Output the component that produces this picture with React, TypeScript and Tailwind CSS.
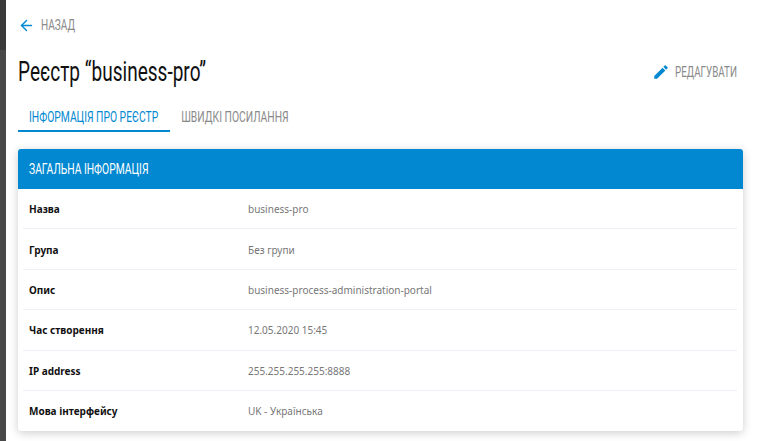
import { ArrowLeft } from 'lucide-react';

const rows = [
  ['Назва', 'business-pro'],
  ['Група', 'Без групи'],
  ['Опис', 'business-process-administration-portal'],
  ['Час створення', '12.05.2020 15:45'],
  ['IP address', '255.255.255.255:8888'],
  ['Мова інтерфейсу', 'UK - Українська'],
];

const App = () => {
  return (
    <div className="flex h-[441px] w-[762px] overflow-hidden bg-white font-['Noto_Sans',sans-serif]">
      {/* Бічна смуга */}
      <div className="flex w-[6px] shrink-0 flex-col bg-[#484848]">
        <div className="h-[50px] bg-[#3a3a3a]"></div>
      </div>

      <div className="flex-1 pl-3 pr-[19px]">
        <div className="flex h-[50px] items-center pt-[1px]">
          <ArrowLeft size={17} strokeWidth={2} className="mr-[6px] text-[#0288d1]" />
          <span className="origin-left scale-x-[0.72] font-['Roboto',sans-serif] text-[14px] text-[#8a8a8a]">НАЗАД</span>
        </div>

        <div className="flex h-[44px] items-center justify-between">
          <h1 className="origin-left scale-x-[0.68] whitespace-nowrap font-['Roboto',sans-serif] text-[28px] leading-none text-[#111111]">
            Реєстр “business-pro”
          </h1>
          <div className="flex items-center">
            <svg width="18" height="18" viewBox="0 0 24 24" className="mr-[5px] fill-[#0288d1]">
              <path d="M3 17.25V21h3.75L17.81 9.94l-3.75-3.75L3 17.25zM20.71 7.04a1 1 0 0 0 0-1.41l-2.34-2.34a1 1 0 0 0-1.41 0l-1.83 1.83 3.75 3.75 1.83-1.83z" />
            </svg>
            <span className="w-[68px] origin-left scale-x-[0.7] whitespace-nowrap font-['Roboto',sans-serif] text-[14px] text-[#8a8a8a]">
              РЕДАГУВАТИ
            </span>
          </div>
        </div>

        <div className="mt-[2px] flex h-[36px] items-end">
          <div className="flex h-[35px] w-[152px] items-center justify-center border-b-2 border-[#0288d1] pt-[7px]">
            <span className="scale-x-[0.737] whitespace-nowrap font-['Roboto',sans-serif] text-[14px] text-[#0288d1]">
              ІНФОРМАЦІЯ ПРО РЕЄСТР
            </span>
          </div>
          <div className="flex h-[35px] w-[130px] items-center justify-center border-b-2 border-transparent pt-[7px]">
            <span className="scale-x-[0.737] whitespace-nowrap font-['Roboto',sans-serif] text-[14px] text-[#8a8a8a]">
              ШВИДКІ ПОСИЛАННЯ
            </span>
          </div>
        </div>

        <div className="mt-[17px] overflow-hidden rounded-[3px] bg-white shadow-[0_2px_10px_rgba(0,0,0,0.2)]">
          <div className="flex h-[40px] items-center bg-[#0288d1] pl-[11px]">
            <span className="origin-left scale-x-[0.737] whitespace-nowrap font-['Roboto',sans-serif] text-[14px] text-white">
              ЗАГАЛЬНА ІНФОРМАЦІЯ
            </span>
          </div>
          <div className="pl-[5px] pr-[6px]">
            {rows.map(([label, value], i) => (
              <div
                key={label}
                className={`flex h-[40.4px] items-center pl-[6px] pr-[6px] pt-[2px] text-[10px] ${i < rows.length - 1 ? 'border-b border-[#eceff3]' : 'border-b border-transparent'}`}
              >
                <span className="w-[219px] font-bold text-[#111111]">{label}</span>
                <span className="text-[#777777]">{value}</span>
              </div>
            ))}
          </div>
        </div>
      </div>
    </div>
  );
};

export default App;
